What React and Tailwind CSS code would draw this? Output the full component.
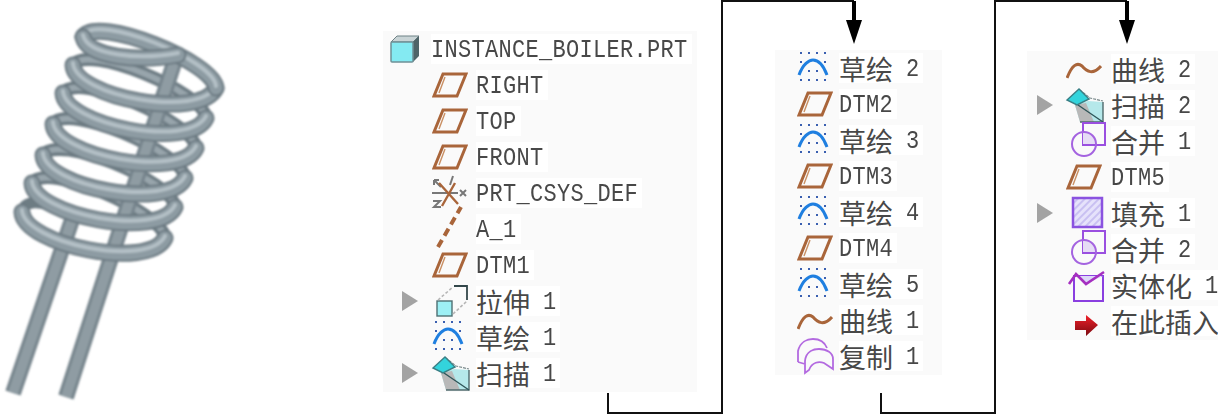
import React from 'react';

const lefts = [[83, 37], [73, 65], [63, 93], [53, 124], [43, 155], [32, 183], [22, 212]];
const rights = [[216, 88], [206, 118], [196, 148], [185, 178], [175, 207], [165, 238]];

const frontArc = (l, r) =>
  `M${l[0]} ${l[1]} C${l[0] + 2} ${l[1] + 33} ${r[0] - 16} ${r[1] + 33} ${r[0]} ${r[1]}`;
const backArc = (r, l) =>
  `M${r[0]} ${r[1]} C${r[0] - 2} ${r[1] - 26} ${l[0] + 14} ${l[1] - 22} ${l[0]} ${l[1]}`;

const Tube = ({ d }) => (
  <g fill="none" strokeLinecap="round">
    <path d={d} stroke="#6b7981" strokeWidth="17" />
    <path d={d} stroke="#8d9ba3" strokeWidth="13" />
    <path d={d} stroke="#b4c0c6" strokeWidth="4" transform="translate(0 -2)" />
  </g>
);

const Rod = ({ d }) => (
  <g fill="none">
    <path d={d} stroke="#76848c" strokeWidth="16" />
    <path d={d} stroke="#8f9ca3" strokeWidth="10" />
  </g>
);

// The boiler coil, drawn back to front.
const Spring = () => (
  <svg width="230" height="416" viewBox="0 0 230 416" className="shrink-0">
    <defs>
      <filter id="soft">
        <feGaussianBlur stdDeviation="0.8" />
      </filter>
    </defs>
    <g filter="url(#soft)">
      {rights.map((r, i) => (
        <g key={i} fill="none" strokeLinecap="round">
          <path d={backArc(r, lefts[i])} stroke="#6d7b83" strokeWidth="13" />
          <path d={backArc(r, lefts[i])} stroke="#98a5ac" strokeWidth="6" />
        </g>
      ))}
      <path d="M22 212 C24 200 40 200 62 210" fill="none" stroke="#6d7b83" strokeWidth="11" strokeLinecap="round" />
      <Rod d="M13 393 L73 217" />
      <Rod d="M66 397 L175 60" />
      {[5, 4, 3, 2, 1, 0].map((i) => (
        <Tube key={i} d={frontArc(lefts[i + 1], rights[i])} />
      ))}
      <Tube d={backArc(rights[0], lefts[0])} />
      <Tube d="M83 37 C88 58 140 62 178 55" />
    </g>
  </svg>
);

const Caret = () => (
  <svg width="16" height="20" viewBox="0 0 16 20" className="shrink-0">
    <path d="M0 0 L16 10 L0 20 Z" fill="#a3a3a3" />
  </svg>
);

const Cube = () => (
  <svg width="30" height="28" viewBox="0 0 30 28" className="shrink-0">
    <path d="M1 7 L7 1 H29 L23 7 Z" fill="#c9d4d6" stroke="#6f8286" />
    <path d="M23 7 L29 1 V21 L23 27 Z" fill="#4f6468" />
    <rect x="1" y="7" width="22" height="20" rx="1" fill="#84eaf2" stroke="#6f9096" strokeWidth="1.5" />
  </svg>
);

const Plane = () => (
  <svg width="36" height="36" viewBox="0 0 36 36">
    <path d="M2 29 L11 7 H34 L25 29 Z" fill="none" stroke="#a9653a" strokeWidth="3" />
    <path d="M7 26 L13 10" stroke="#c98f63" strokeWidth="1.4" />
  </svg>
);

const Csys = () => (
  <svg width="36" height="36" viewBox="0 0 36 36" className="overflow-visible">
    <g stroke="#777" strokeWidth="2" fill="none">
      <path d="M2 5 L9 12 M2 5 H7 M2 5 V10" />
      <path d="M0 18 H26" />
      <path d="M1 26 H8 L2 32 H9" />
      <path d="M28 15 L34 21 M34 15 L28 21" />
      <path d="M21 1 L18 10" />
    </g>
    <path d="M7 8 L26 29 M23 8 L10 31" stroke="#a9653a" strokeWidth="2.4" />
  </svg>
);

const Axis = () => (
  <svg width="36" height="36" viewBox="0 0 36 36" className="overflow-visible">
    <path d="M6 36 L29 -4" stroke="#a9653a" strokeWidth="4" strokeDasharray="8 5" />
  </svg>
);

const Extrude = () => (
  <svg width="36" height="36" viewBox="0 0 36 36">
    <rect x="5" y="18" width="15" height="15" fill="#9df0f5" stroke="#4f6f73" strokeWidth="1.4" />
    <path d="M6 17 L21 4 M21 31 L35 18" stroke="#b5b5b5" strokeWidth="1.6" strokeDasharray="3 2" />
    <path d="M22 3 H35 V17" fill="none" stroke="#33474a" strokeWidth="1.8" />
  </svg>
);

const Sketch = () => (
  <svg width="36" height="36" viewBox="0 0 36 36">
    <g fill="#3a5fb0">
      {[3, 11, 19, 27].map((x) => (
        <React.Fragment key={x}>
          <rect x={x} y="2" width="2" height="2" />
          <rect x={x} y="29" width="2" height="2" />
        </React.Fragment>
      ))}
      <rect x="3" y="11" width="2" height="2" />
      <rect x="27" y="11" width="2" height="2" />
      <rect x="11" y="20" width="2" height="2" />
      <rect x="19" y="20" width="2" height="2" />
    </g>
    <path d="M2 25 C6 14 12 10 16 10 C22 10 27 17 30 25" fill="none" stroke="#1f7fe0" strokeWidth="3" />
  </svg>
);

const Sweep = () => (
  <svg width="38" height="36" viewBox="0 0 38 36" className="overflow-visible shrink-0">
    <path d="M22 14 L37 15 V35 H14 L9 18 Z" fill="#b5e8ea" />
    <path d="M9 18 L20 16 L28 35 H14 Z" fill="#b8b8b8" />
    <path d="M37 15 V35 H14" fill="none" stroke="#4f6a6c" strokeWidth="1.4" />
    <path d="M14 3 L24 11 L37 14" fill="none" stroke="#7a8a8c" strokeWidth="1.2" strokeDasharray="3 1" />
    <path d="M12 18 L37 35" stroke="#2f5558" strokeWidth="1.4" />
    <path d="M1 13 L13 2 L23 12 L11 18 Z" fill="#33d4dc" stroke="#3a7f85" strokeWidth="1.4" />
  </svg>
);

const Curve = () => (
  <svg width="36" height="36" viewBox="0 0 36 36">
    <path d="M1 27 C6 14 11 11 16 15 C21 21 27 24 35 15" fill="none" stroke="#a9653a" strokeWidth="3" />
  </svg>
);

const Copy = () => (
  <svg width="38" height="38" viewBox="0 0 38 38" className="shrink-0">
    <g fill="none" stroke="#b36ae0" strokeWidth="1.8">
      <path d="M1 25 V14 C3 5 10 2 16 2 C24 2 28 6 30 11" />
      <path d="M1 25 L8 27 M8 36 L8 24 C9 14 17 12 22 12 C30 12 36 16 36 22 V32 L27 26 C22 24 15 25 12 33 Z" />
    </g>
  </svg>
);

const Merge = () => (
  <svg width="40" height="38" viewBox="0 0 40 38" className="overflow-visible shrink-0">
    <rect x="17" y="1" width="22" height="22" fill="none" stroke="#9a4fe0" strokeWidth="2" />
    <path d="M17 10 A12 12 0 0 1 30 22 H17 Z" fill="#e6dcf5" />
    <circle cx="18" cy="22" r="12" fill="none" stroke="#a463e0" strokeWidth="2" />
  </svg>
);

const Fill = () => (
  <svg width="36" height="36" viewBox="0 0 36 36" className="overflow-visible">
    <defs>
      <pattern id="hatch" width="5" height="5" patternUnits="userSpaceOnUse" patternTransform="rotate(45)">
        <rect width="5" height="5" fill="#e6e2fb" />
        <rect width="2" height="5" fill="#c9c0f2" />
      </pattern>
    </defs>
    <rect x="7" y="3" width="29" height="29" fill="url(#hatch)" stroke="#8a52e0" strokeWidth="2.5" />
  </svg>
);

const Solidify = () => (
  <svg width="40" height="38" viewBox="0 0 40 38" className="overflow-visible shrink-0">
    <rect x="8" y="10" width="29" height="25" fill="none" stroke="#8a3fe0" strokeWidth="2" />
    <path d="M10 10 H37 L20 18 Z" fill="#dcd8f8" />
    <path d="M3 18 L10 8 L20 18 L38 6" fill="none" stroke="#a52fc0" strokeWidth="2.6" />
  </svg>
);

const InsertArrow = () => (
  <svg width="36" height="36" viewBox="0 0 36 36">
    <defs>
      <linearGradient id="red" x1="0" y1="0" x2="0" y2="1">
        <stop offset="0" stopColor="#f0202a" />
        <stop offset="1" stopColor="#7a0a10" />
      </linearGradient>
    </defs>
    <path d="M9 18 H20 V12 L32 22 L20 33 V27 H9 Z" fill="url(#red)" />
  </svg>
);

const Label = ({ cjk, mono, num }) => (
  <span className="flex items-center h-[30px] bg-white pr-1 text-[#484848] leading-none whitespace-nowrap">
    {cjk && <span className="text-[27px] font-['Noto_Sans_CJK_SC',sans-serif]">{cjk}</span>}
    {mono && <span className="inline-block pt-1 scale-y-[1.2] text-[22px] tracking-[0.3px] font-['Liberation_Mono',monospace]">{mono}</span>}
    {num && <span className="inline-block pt-1 ml-[13px] scale-y-[1.2] text-[22px] font-['Liberation_Mono',monospace]">{num}</span>}
  </span>
);

const Row = ({ caret, icon, className, children }) => (
  <div className="flex items-center h-9">
    {caret !== undefined && <div className="w-4 shrink-0">{caret && <Caret />}</div>}
    <div className={`w-9 shrink-0 flex justify-start ${className}`}>{icon}</div>
    {children}
  </div>
);

export default function App() {
  return (
    <div className="relative flex w-[1218px] h-[416px] overflow-hidden bg-white">
      <Spring />

      <div className="w-[314px] h-[361px] mt-[31px] ml-[153px] shrink-0 bg-[#fafafa] pl-[19px]">
        <div className="flex items-center h-9 -ml-3">
          <Cube />
          <span className="ml-[11px]"><Label mono="INSTANCE_BOILER.PRT" /></span>
        </div>
        {[
          ['RIGHT', <Plane />],
          ['TOP', <Plane />],
          ['FRONT', <Plane />],
          ['PRT_CSYS_DEF', <Csys />],
          ['A_1', <Axis />],
          ['DTM1', <Plane />],
        ].map(([name, icon]) => (
          <Row key={name} caret={false} icon={icon} className="ml-[14px] mr-2">
            <Label mono={name} />
          </Row>
        ))}
        <Row caret icon={<Extrude />} className="ml-[14px] mr-2"><Label cjk="拉伸" num="1" /></Row>
        <Row caret={false} icon={<Sketch />} className="ml-[14px] mr-2"><Label cjk="草绘" num="1" /></Row>
        <Row caret icon={<Sweep />} className="ml-[14px] mr-2"><Label cjk="扫描" num="1" /></Row>
      </div>

      <div className="w-[167px] h-[325px] mt-[50px] ml-[78px] shrink-0 bg-[#fafafa] pl-[22px]">
        <Row icon={<Sketch />} className="mr-1.5"><Label cjk="草绘" num="2" /></Row>
        <Row icon={<Plane />} className="mr-1.5"><Label mono="DTM2" /></Row>
        <Row icon={<Sketch />} className="mr-1.5"><Label cjk="草绘" num="3" /></Row>
        <Row icon={<Plane />} className="mr-1.5"><Label mono="DTM3" /></Row>
        <Row icon={<Sketch />} className="mr-1.5"><Label cjk="草绘" num="4" /></Row>
        <Row icon={<Plane />} className="mr-1.5"><Label mono="DTM4" /></Row>
        <Row icon={<Sketch />} className="mr-1.5"><Label cjk="草绘" num="5" /></Row>
        <Row icon={<Curve />} className="mr-1.5"><Label cjk="曲线" num="1" /></Row>
        <Row icon={<Copy />} className="mr-1.5"><Label cjk="复制" num="1" /></Row>
      </div>

      <div className="w-[191px] h-[289px] mt-[51px] ml-[85px] shrink-0 bg-[#fafafa] pl-[10px]">
        <Row caret={false} icon={<Curve />} className="ml-[13px] mr-[9px]"><Label cjk="曲线" num="2" /></Row>
        <Row caret icon={<Sweep />} className="ml-[13px] mr-[9px]"><Label cjk="扫描" num="2" /></Row>
        <Row caret={false} icon={<Merge />} className="ml-[13px] mr-[9px]"><Label cjk="合并" num="1" /></Row>
        <Row caret={false} icon={<Plane />} className="ml-[13px] mr-[9px]"><Label mono="DTM5" /></Row>
        <Row caret icon={<Fill />} className="ml-[13px] mr-[9px]"><Label cjk="填充" num="1" /></Row>
        <Row caret={false} icon={<Merge />} className="ml-[13px] mr-[9px]"><Label cjk="合并" num="2" /></Row>
        <Row caret={false} icon={<Solidify />} className="ml-[13px] mr-[9px]"><Label cjk="实体化" num="1" /></Row>
        <Row caret={false} icon={<InsertArrow />} className="ml-[13px] mr-[9px]"><Label cjk="在此插入" /></Row>
      </div>

      {/* connectors between the three tree fragments */}
      <svg width="1218" height="416" className="absolute inset-0 pointer-events-none">
        <g fill="none" stroke="#111" strokeWidth="2">
          <path d="M608 393 V413 H722 V1 H854" />
          <path d="M881 393 V413 H995 V1 H1127" />
        </g>
        <path d="M854 1 V24 M1127 1 V24" stroke="#000" strokeWidth="4" />
        <path d="M846 20 H862 L854 44 Z" fill="#000" />
        <path d="M1119 20 H1135 L1127 44 Z" fill="#000" />
      </svg>
    </div>
  );
}
